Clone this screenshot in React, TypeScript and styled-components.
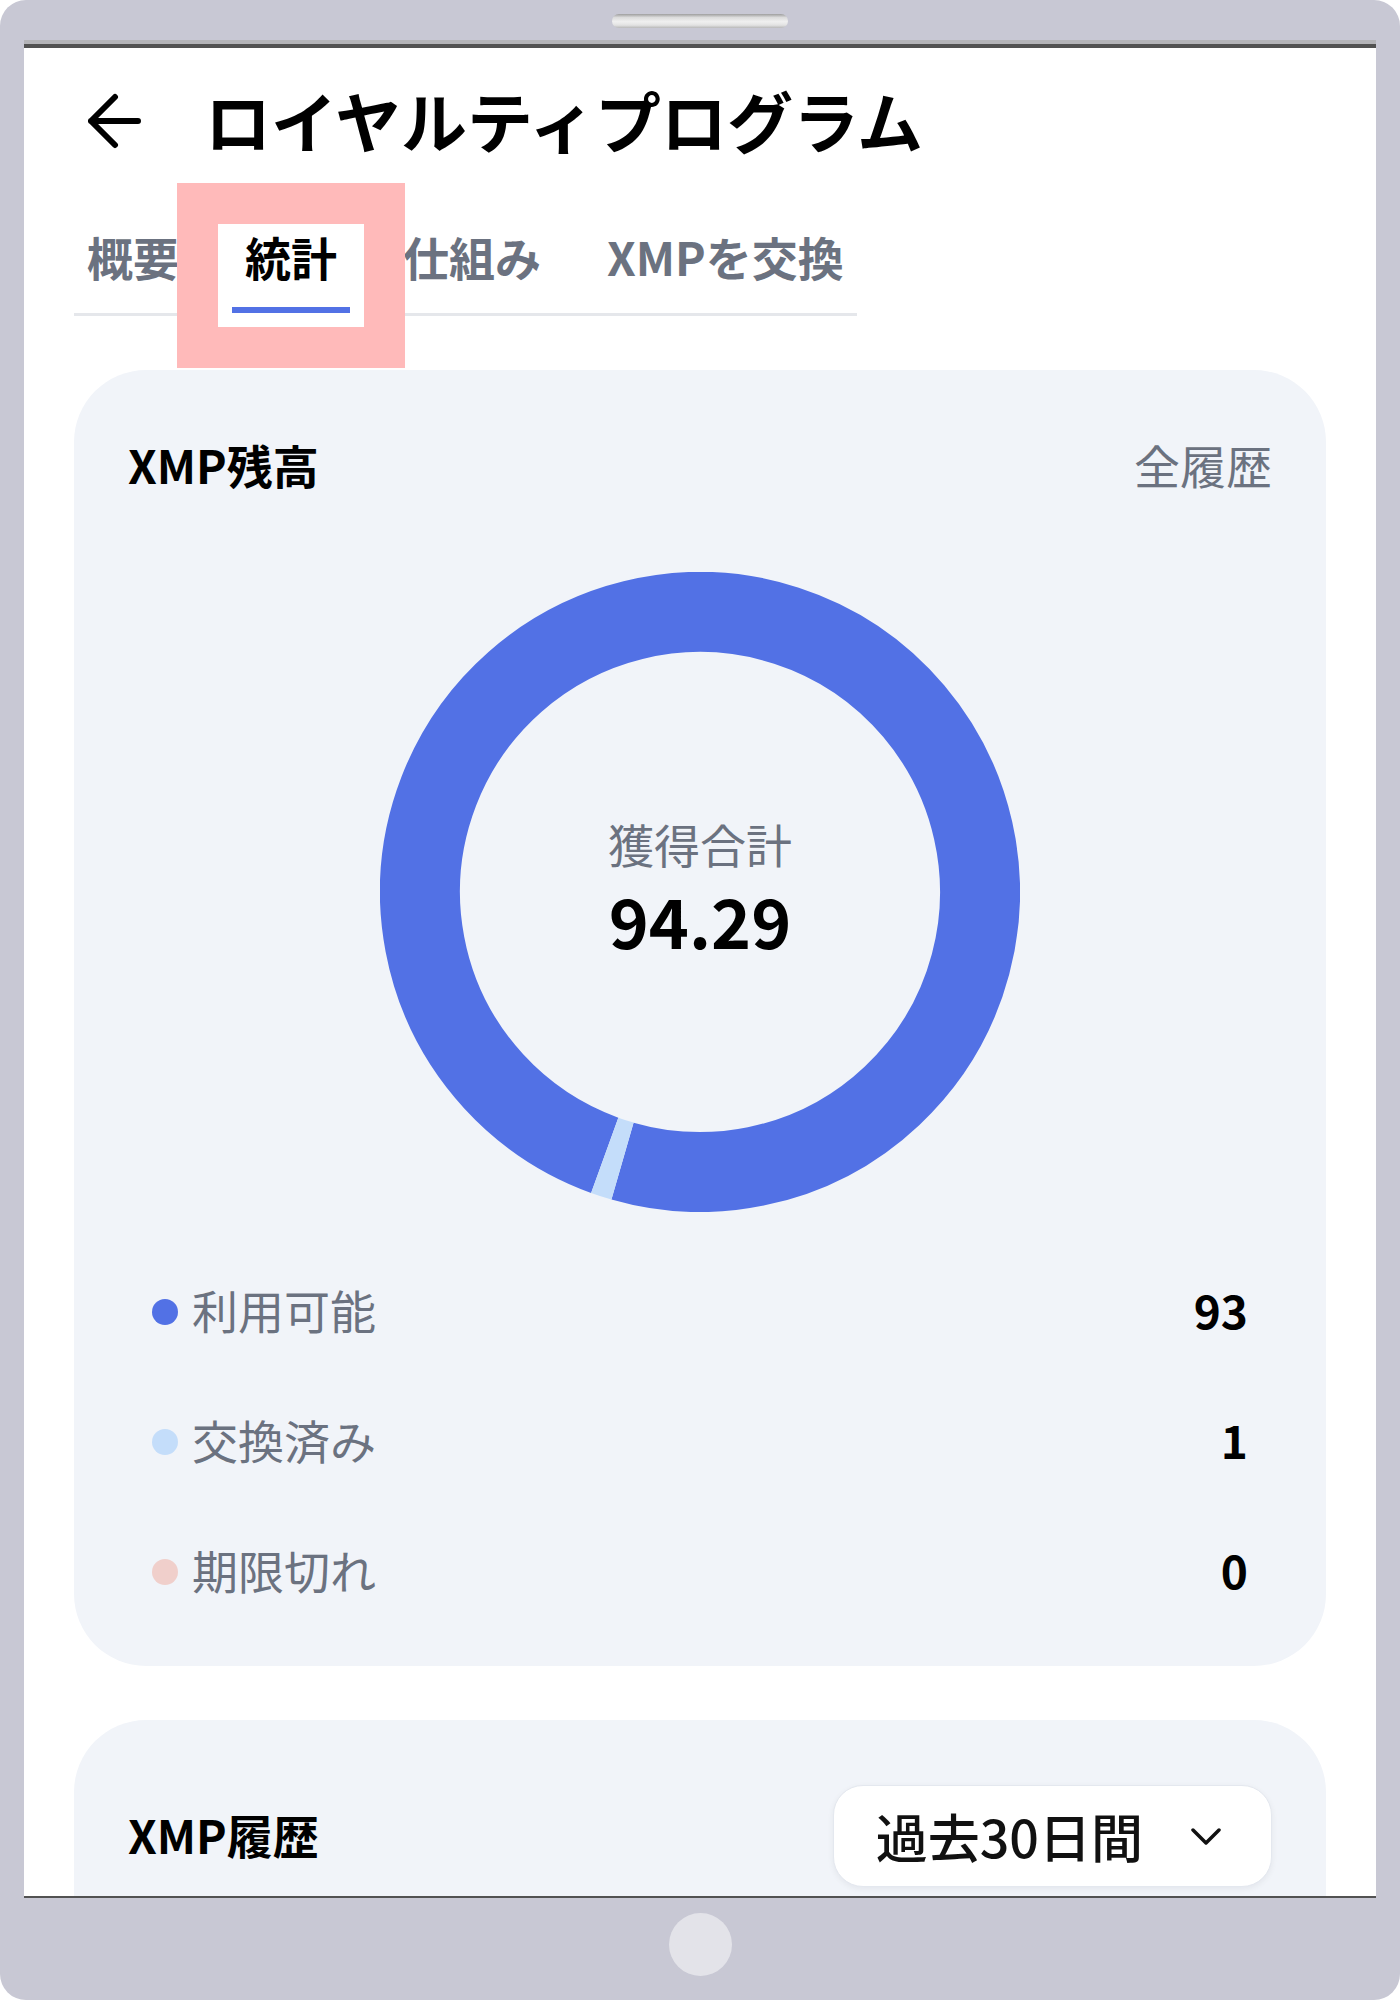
import styled, { createGlobalStyle, css } from "styled-components";

interface Segment {
  label: string;
  value: number;
  color: string;
}

const segments: Segment[] = [
  { label: "利用可能", value: 93, color: "#5271e5" },
  { label: "交換済み", value: 1, color: "#c4ddfa" },
  { label: "期限切れ", value: 0, color: "#f0cfcb" },
];

const tabs = ["概要", "統計", "仕組み", "XMPを交換"];

// angle in degrees, clockwise from 12 o'clock
function polar(cx: number, cy: number, r: number, angle: number) {
  const rad = (angle * Math.PI) / 180;
  return { x: cx + r * Math.sin(rad), y: cy - r * Math.cos(rad) };
}

function arcPath(cx: number, cy: number, r: number, from: number, to: number) {
  const start = polar(cx, cy, r, from);
  const end = polar(cx, cy, r, to);
  const large = to - from > 180 ? 1 : 0;
  return `M ${start.x} ${start.y} A ${r} ${r} 0 ${large} 1 ${end.x} ${end.y}`;
}

function Donut({ data, startAngle }: { data: Segment[]; startAngle: number }) {
  const sum = data.reduce((acc, d) => acc + d.value, 0);
  let angle = startAngle;
  return (
    <svg width="640" height="640" viewBox="0 0 640 640">
      {data
        .filter((d) => d.value > 0)
        .map((d) => {
          const sweep = (d.value / sum) * 360;
          const from = angle;
          angle += sweep;
          return (
            <path
              key={d.label}
              d={arcPath(320, 320, 280, from, from + sweep - 0.01)}
              fill="none"
              stroke={d.color}
              strokeWidth={80}
            />
          );
        })}
    </svg>
  );
}

function App() {
  return (
    <>
      <GlobalStyle />
      <Device>
        <TopBezel>
          <Speaker />
        </TopBezel>
        <Screen>
          <Viewport>
            <Header>
              <svg width="54" height="60" viewBox="0 0 54 60">
                <path
                  d="M3 30H50 M27 6L3 30L27 54"
                  fill="none"
                  stroke="#000"
                  strokeWidth={6}
                  strokeLinecap="round"
                  strokeLinejoin="round"
                />
              </svg>
              <Title>ロイヤルティプログラム</Title>
            </Header>

            <TabBar>
              {tabs.map((t) => (
                <Tab key={t} $active={t === "統計"}>
                  {t}
                </Tab>
              ))}
            </TabBar>

            <Card $padTop={72} $padBottom={29}>
              <CardHead>
                <CardTitle>XMP残高</CardTitle>
                <MutedLink>全履歴</MutedLink>
              </CardHead>

              <ChartArea>
                <Donut data={segments} startAngle={199.9} />
                <ChartCenter>
                  <ChartLabel>獲得合計</ChartLabel>
                  <ChartValue>94.29</ChartValue>
                </ChartCenter>
              </ChartArea>

              <Legend>
                {segments.map((s) => (
                  <LegendRow key={s.label}>
                    <Dot $color={s.color} />
                    <LegendLabel>{s.label}</LegendLabel>
                    <LegendValue>{s.value}</LegendValue>
                  </LegendRow>
                ))}
              </Legend>
            </Card>

            <Card $padTop={65} $padBottom={200}>
              <CardHead>
                <CardTitle $lift={5}>XMP履歴</CardTitle>
                <Dropdown>
                  過去30日間
                  <svg width="30" height="17" viewBox="0 0 30 17">
                    <path
                      d="M2 2L15 15L28 2"
                      fill="none"
                      stroke="#111"
                      strokeWidth={3.5}
                      strokeLinecap="round"
                      strokeLinejoin="round"
                    />
                  </svg>
                </Dropdown>
              </CardHead>
            </Card>
          </Viewport>
        </Screen>
        <BottomBezel>
          <HomeButton />
        </BottomBezel>
      </Device>
    </>
  );
}

const GlobalStyle = createGlobalStyle`
  body {
    margin: 0;
    background: #fff;
    font-family: "Noto Sans CJK JP", "Noto Sans", sans-serif;
  }
`;

const Device = styled.div`
  width: 1400px;
  height: 2000px;
  background: #c8c8d4;
  border-radius: 26px;
  display: flex;
  flex-direction: column;
  overflow: hidden;
`;

const TopBezel = styled.div`
  height: 40px;
  box-sizing: border-box;
  padding-top: 14px;
  display: flex;
  justify-content: center;
`;

const Speaker = styled.div`
  width: 176px;
  height: 14px;
  border-radius: 7px;
  background: linear-gradient(to bottom, #9e9e9e 0%, #dcdcdc 25%, #f0f0f0 55%, #e2e2e2 80%, #b8b8b8 100%);
`;

const Screen = styled.div`
  margin: 0 24px;
  height: 1858px;
  box-sizing: border-box;
  border-top: 4px solid #b4b4b8;
  display: flex;
  flex-direction: column;
`;

const Viewport = styled.main`
  flex: 1;
  background: #fff;
  border-top: 4px solid #525252;
  border-bottom: 2px solid #525252;
  overflow: hidden;
  padding: 0 50px;
`;

const BottomBezel = styled.div`
  flex: 1;
  display: flex;
  justify-content: center;
  padding-top: 15px;
`;

const HomeButton = styled.div`
  width: 63px;
  height: 63px;
  border-radius: 50%;
  background: #e3e3e9;
`;

const Header = styled.header`
  height: 146px;
  display: flex;
  align-items: center;
  gap: 63px;
  padding-left: 14px;
`;

const Title = styled.h1`
  margin: 0 0 4px;
  font-size: 66px;
  line-height: 1;
  font-weight: 700;
  color: #000;
`;

const TabBar = styled.nav`
  display: flex;
  width: fit-content;
  gap: 40px;
  margin-top: 44px;
  border-bottom: 3px solid #e5e7eb;
`;

const Tab = styled.button<{ $active?: boolean }>`
  position: relative;
  padding: 0 13px 39px;
  border: 0;
  background: transparent;
  font-family: inherit;
  font-size: 46px;
  line-height: 36px;
  font-weight: 700;
  color: #6b7280;
  white-space: nowrap;

  ${({ $active }) =>
    $active &&
    css`
      z-index: 1;
      color: #000;
      background: #fff;
      box-shadow: 0 0 0 14px #fff, 0 0 0 55px #ffbaba;

      &::after {
        content: "";
        position: absolute;
        left: 0;
        right: 0;
        bottom: 0;
        height: 6px;
        background: #5271e5;
      }
    `}
`;

const Card = styled.section<{ $padTop: number; $padBottom: number }>`
  margin-top: 54px;
  background: #f1f4f9;
  border-radius: 72px;
  padding: ${({ $padTop, $padBottom }) => `${$padTop}px 54px ${$padBottom}px`};
`;

const CardHead = styled.div`
  display: flex;
  justify-content: space-between;
  align-items: center;
`;

const CardTitle = styled.h2<{ $lift?: number }>`
  margin: 0 0 ${({ $lift = 0 }) => $lift}px;
  font-size: 46px;
  line-height: 44px;
  font-weight: 700;
  color: #000;
`;

const MutedLink = styled.span`
  font-size: 46px;
  line-height: 44px;
  color: #6b7280;
`;

const ChartArea = styled.div`
  margin-top: 86px;
  display: grid;
  place-items: center;

  & > * {
    grid-area: 1 / 1;
  }
`;

const ChartCenter = styled.div`
  display: flex;
  flex-direction: column;
  align-items: center;
`;

const ChartLabel = styled.span`
  font-size: 46px;
  line-height: 54px;
  color: #6b7280;
`;

const ChartValue = styled.span`
  font-size: 68px;
  line-height: 99px;
  font-weight: 700;
  color: #000;
`;

const Legend = styled.div`
  margin-top: 35px;
  padding: 0 24px;
`;

const LegendRow = styled.div`
  height: 130px;
  display: flex;
  align-items: center;
  gap: 14px;
  line-height: 52px;
`;

const Dot = styled.span<{ $color: string }>`
  width: 26px;
  height: 26px;
  border-radius: 50%;
  background: ${({ $color }) => $color};
`;

const LegendLabel = styled.span`
  flex: 1;
  font-size: 46px;
  color: #6b7280;
  margin-bottom: 6px;
`;

const LegendValue = styled.span`
  font-size: 46px;
  font-weight: 700;
  color: #000;
  margin-bottom: 6px;
`;

const Dropdown = styled.button`
  height: 102px;
  box-sizing: border-box;
  display: flex;
  align-items: center;
  gap: 48px;
  padding: 0 50px 0 42px;
  border: 1px solid #e4e8ef;
  border-radius: 30px;
  background: #fff;
  box-shadow: 0 2px 6px rgba(16, 24, 40, 0.06);
  font-family: inherit;
  font-size: 52px;
  line-height: 60px;
  font-weight: 500;
  color: #111;
`;

export default App;
